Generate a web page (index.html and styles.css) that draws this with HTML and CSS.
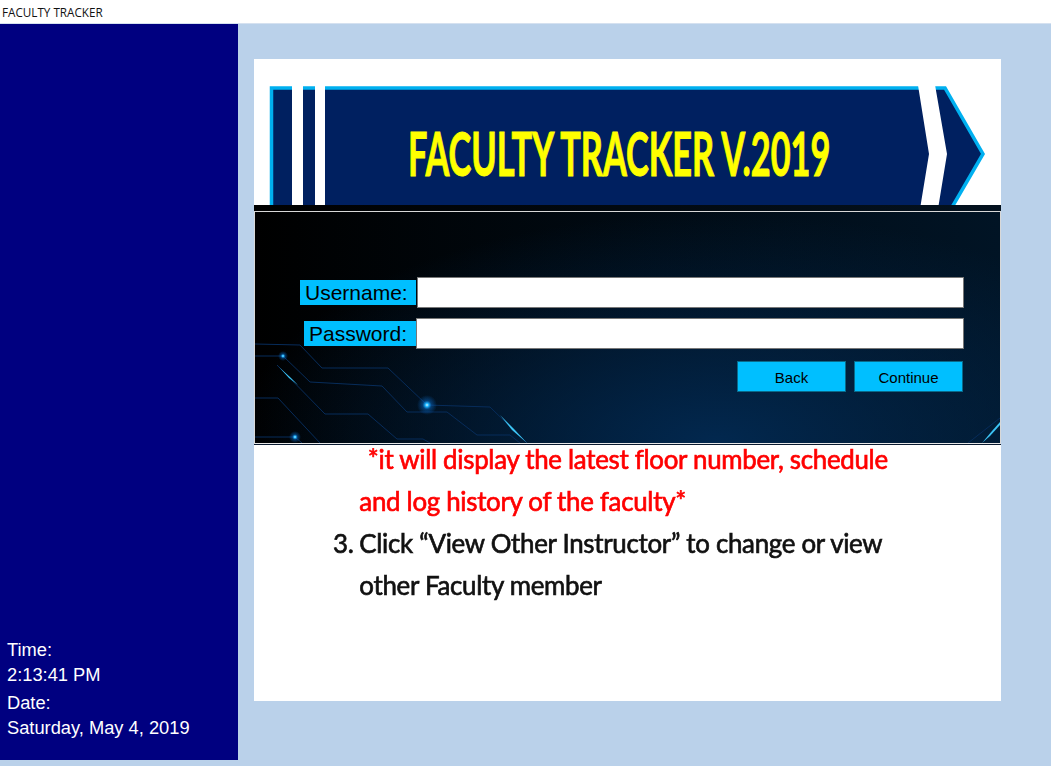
FILE: index.html
```html
<!DOCTYPE html>
<html lang="en">

<head>
    <meta charset="UTF-8">
    <meta name="viewport" content="width=device-width, initial-scale=1.0">
    <title>Faculty Tracker</title>
    <link rel="stylesheet" href="styles.css">
</head>

<body>
    <div class="titlebar">FACULTY TRACKER</div>

    <div class="window">
        <aside class="sidebar">
            <div class="clock">
                <p>Time:</p>
                <p class="value">2:13:41 PM</p>
            </div>
            <div class="clock">
                <p>Date:</p>
                <p class="value">Saturday, May 4, 2019</p>
            </div>
        </aside>

        <main class="card">
            <!-- banner -->
            <svg class="banner" width="747" height="146" viewBox="0 0 747 146">
                <path class="banner-shape" d="M17.5 150V29H691L729 95L697 150Z" />
                <rect class="banner-gap" x="38" y="20" width="11" height="130" />
                <rect class="banner-gap" x="61" y="20" width="10" height="130" />
                <polygon class="banner-gap" points="663,20 680,20 693,95 684,150 666,150 675,95" />
                <text class="banner-title" transform="translate(154 117) scale(0.554 1)">FACULTY TRACKER V.2019</text>
            </svg>
            <div class="band"></div>

            <section class="panel">
                <!-- circuit lines behind the form -->
                <svg class="circuit" viewBox="255 212 745 231" width="745" height="231">
                    <defs>
                        <radialGradient id="glow">
                            <stop offset="0" stop-color="#d8f6ff" />
                            <stop offset="0.18" stop-color="#19b5ff" />
                            <stop offset="0.45" stop-color="#0a6fd0" stop-opacity="0.45" />
                            <stop offset="1" stop-color="#0a6fd0" stop-opacity="0" />
                        </radialGradient>
                    </defs>
                    <g class="trace">
                        <polyline points="255,344 300,345 322,368 388,368 427,405 490,407 527,443" />
                        <polyline points="277,365 325,414 368,414 397,439 423,439 430,443" />
                        <polyline points="255,356 283,356 310,382 382,386 407,412 447,412 477,435 510,435 520,443" />
                        <polyline points="255,398 278,398 320,443" />
                        <polyline points="255,437 295,437 302,443" />
                        <polyline points="968,443 1000,418" />
                    </g>
                    <g class="streak">
                        <polygon points="279,367 291,378 298,385 289,378" />
                        <polygon points="500,415 514,429 527,443 512,430" />
                        <polygon points="982,443 992,431 1000,422 1000,425 990,436" />
                    </g>
                    <circle cx="283" cy="356" r="5" fill="url(#glow)" />
                    <circle cx="427" cy="405" r="10" fill="url(#glow)" />
                    <circle cx="295" cy="437" r="6" fill="url(#glow)" />
                </svg>

                <form class="login">
                    <div class="row row-user">
                        <label class="field-label label-user" for="username">Username:</label>
                        <input class="field input-user" id="username" type="text">
                    </div>
                    <div class="row row-pass">
                        <label class="field-label label-pass" for="password">Password:</label>
                        <input class="field input-pass" id="password" type="password">
                    </div>
                    <div class="actions">
                        <button class="btn" type="button">Back</button>
                        <button class="btn" type="button">Continue</button>
                    </div>
                </form>
            </section>

            <div class="slide">
                <p class="note note-first">*it will display the latest floor number, schedule</p>
                <p class="note">and log history of the faculty*</p>
                <div class="step">
                    <span class="step-num">3.</span>
                    <p>Click “View Other Instructor” to change or view<br>other Faculty member</p>
                </div>
            </div>
        </main>
    </div>
</body>

</html>
```

FILE: styles.css
```css
* {
    margin: 0;
    padding: 0;
    box-sizing: border-box;
}

body {
    width: 1051px;
    height: 766px;
    overflow: hidden;
    background: #bad1ea;
    font-family: "Liberation Sans", Arial, sans-serif;
}

.titlebar {
    height: 24px;
    padding: 4px 0 0 2px;
    background: #fff;
    border-bottom: 1px solid #d5e1f0;
    color: #111;
    font-family: "Open Sans", sans-serif;
    font-size: 11.7px;
    line-height: 16px;
}

.window {
    display: flex;
    align-items: flex-start;
}

/* sidebar */
.sidebar {
    display: flex;
    flex-direction: column;
    justify-content: flex-end;
    width: 238px;
    height: 736px;
    padding: 0 0 19px 7px;
    background: #000080;
    color: #fff;
    font-size: 18.3px;
    line-height: 26px;
}

.clock + .clock {
    margin-top: 2px;
}

.clock .value {
    margin-top: -1px;
}

/* card */
.card {
    width: 747px;
    height: 642px;
    margin: 35px 0 0 16px;
    background: #fff;
}

.banner {
    display: block;
}

.banner-shape {
    fill: #002060;
    stroke: #00b0f0;
    stroke-width: 3.5;
}

.banner-gap {
    fill: #fff;
}

.banner-title {
    fill: #ff0;
    font-family: Lato, sans-serif;
    font-size: 62px;
    font-weight: 700;
    stroke: #ff0;
    stroke-width: 1;
}

.band {
    height: 6px;
    background: linear-gradient(90deg, #000, #04121f);
}

/* login panel */
.panel {
    position: relative;
    height: 233px;
    border: 1px solid #d8d8d8;
    border-bottom-color: #e8e8e8;
    box-shadow: 0 1px 0 #0a1a30;
    background:
        radial-gradient(ellipse 480px 230px at 62% 100%, #02284f, rgba(2, 40, 79, 0)),
        linear-gradient(90deg, #000 0%, #011425 100%);
}

.circuit {
    position: absolute;
    top: 0;
    left: 0;
}

.trace polyline {
    fill: none;
    stroke: #072c5a;
    stroke-width: 1;
}

.streak polygon {
    fill: #3cc4f5;
}

.login {
    position: relative;
    display: flex;
    flex-direction: column;
    align-items: flex-end;
    padding: 65px 36px 0 0;
}

.row {
    display: flex;
    align-items: center;
}

.row-pass {
    margin-top: 10px;
}

.field-label {
    height: 25px;
    background: #00bfff;
    color: #000;
    font-size: 21px;
    line-height: 25px;
}

.label-user {
    width: 116px;
    margin-right: 1px;
    padding-left: 5px;
}

.label-pass {
    width: 112px;
    padding-left: 5px;
}

.field {
    display: block;
    background: #fff;
    border: 1px solid #777;
    outline: none;
}

.input-user {
    width: 547px;
    height: 31px;
}

.input-pass {
    width: 548px;
    height: 31px;
}

.actions {
    display: flex;
    gap: 8px;
    margin: 12px 1px 0 0;
}

.btn {
    width: 109px;
    height: 31px;
    padding-top: 2px;
    background: #00bfff;
    border: 1px solid #0a6a8a;
    color: #000;
    font-family: "Liberation Sans", Arial, sans-serif;
    font-size: 15px;
}

/* slide picture under the panel */
.slide {
    padding: 1px 0 0 79px;
    font-family: Lato, sans-serif;
    font-size: 27.5px;
    line-height: 42px;
    letter-spacing: -0.3px;
    color: #111;
    -webkit-text-stroke: 0.7px currentColor;
    transform: scaleX(0.94);
    transform-origin: 79px 0;
    filter: blur(0.4px);
}

.note {
    padding-left: 28px;
    color: #f00;
}

.note-first {
    margin-top: -7px;
    padding-left: 37px;
}

.step {
    display: flex;
    gap: 5px;
}

.step-num {
    width: 23px;
}
```
